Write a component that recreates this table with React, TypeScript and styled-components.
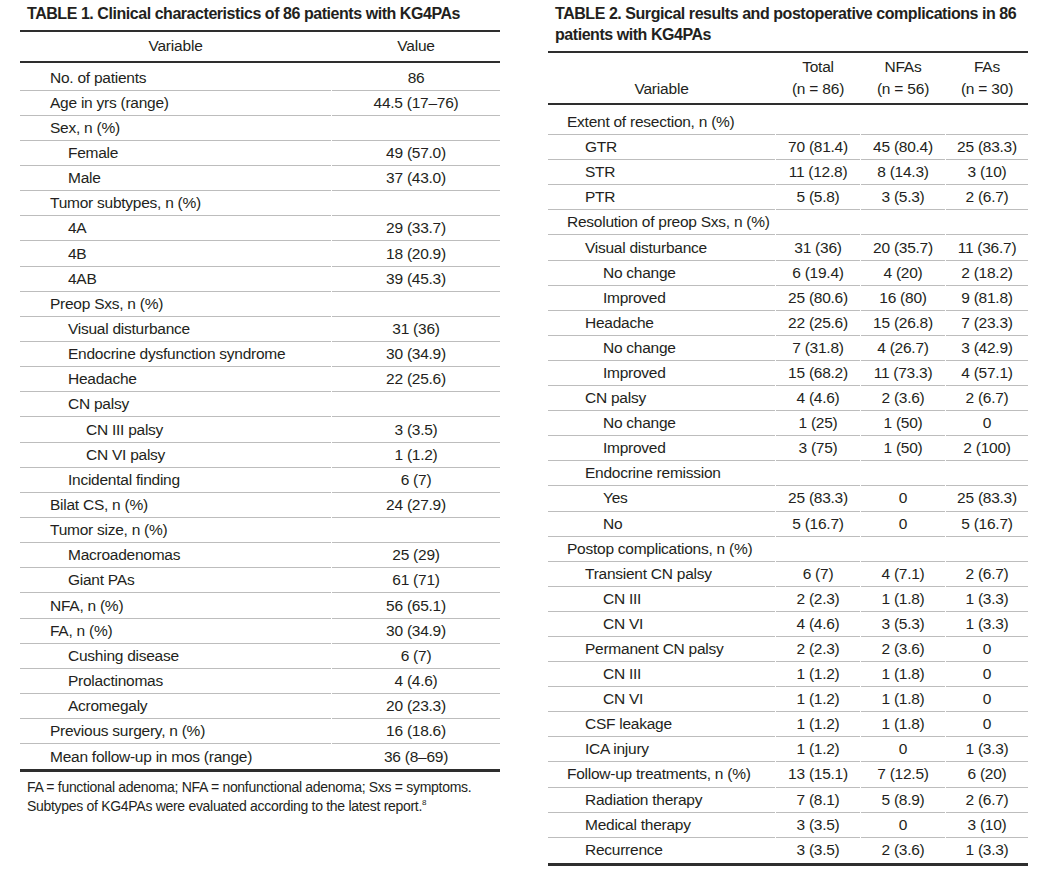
import React from "react";
import styled, { createGlobalStyle } from "styled-components";

const GlobalStyle = createGlobalStyle`
  html, body { margin: 0; padding: 0; background: #ffffff; }
  body { font-family: "Liberation Sans", Arial, sans-serif; color: #231f20; }
`;

const Page = styled.div`
  display: flex;
  align-items: flex-start;
  gap: 48px;
  padding: 3px 16px 0 20px;
  width: 1044px;
  box-sizing: border-box;
`;

const Column = styled.section`
  width: 480px;
  display: flex;
  flex-direction: column;
`;

const Title = styled.h2`
  margin: 0 0 6px 7px;
  font-size: 16px;
  line-height: 21px;
  font-weight: 700;
  letter-spacing: -0.45px;
  color: #231f20;
`;

const Table = styled.div`
  border-top: 2px solid #2e2e2e;
  border-bottom: 3px solid #2e2e2e;
`;

const HeadRow = styled.div<{ $cols: string; $h: number; $align: string }>`
  display: grid;
  grid-template-columns: ${(p) => p.$cols};
  column-gap: 1px;
  height: ${(p) => p.$h}px;
  border-bottom: 2px solid #2e2e2e;
  box-sizing: border-box;
  align-items: ${(p) => p.$align};
`;

const HeadCell = styled.div<{ $pb: number }>`
  text-align: center;
  font-size: 15.5px;
  line-height: 22px;
  letter-spacing: -0.2px;
  padding-bottom: ${(p) => p.$pb}px;
`;

const Body = styled.div<{ $pt: number }>`
  padding-top: ${(p) => p.$pt}px;
`;

const Row = styled.div<{ $cols: string; $h: number }>`
  display: grid;
  grid-template-columns: ${(p) => p.$cols};
  column-gap: 1px;
  height: ${(p) => p.$h}px;
  &:not(:last-child) > div {
    border-bottom: 1px solid #bdbdbd;
  }
`;

const Cell = styled.div`
  display: flex;
  align-items: center;
  justify-content: center;
  font-size: 15.5px;
  letter-spacing: -0.25px;
  white-space: nowrap;
  box-sizing: border-box;
`;

const LabelCell = styled(Cell)<{ $indent: number }>`
  justify-content: flex-start;
  padding-left: ${(p) => p.$indent}px;
`;

const Note = styled.p`
  margin: 6px 0 0 7px;
  font-size: 14px;
  line-height: 19px;
  letter-spacing: -0.3px;
  color: #231f20;
  sup {
    font-size: 8px;
    vertical-align: 6px;
    line-height: 0;
  }
`;

type R1 = [number, string, string];
type R2 = [number, string, string?, string?, string?];

const t1: R1[] = [
  [0, "No. of patients", "86"],
  [0, "Age in yrs (range)", "44.5 (17–76)"],
  [0, "Sex, n (%)", ""],
  [1, "Female", "49 (57.0)"],
  [1, "Male", "37 (43.0)"],
  [0, "Tumor subtypes, n (%)", ""],
  [1, "4A", "29 (33.7)"],
  [1, "4B", "18 (20.9)"],
  [1, "4AB", "39 (45.3)"],
  [0, "Preop Sxs, n (%)", ""],
  [1, "Visual disturbance", "31 (36)"],
  [1, "Endocrine dysfunction syndrome", "30 (34.9)"],
  [1, "Headache", "22 (25.6)"],
  [1, "CN palsy", ""],
  [2, "CN III palsy", "3 (3.5)"],
  [2, "CN VI palsy", "1 (1.2)"],
  [1, "Incidental finding", "6 (7)"],
  [0, "Bilat CS, n (%)", "24 (27.9)"],
  [0, "Tumor size, n (%)", ""],
  [1, "Macroadenomas", "25 (29)"],
  [1, "Giant PAs", "61 (71)"],
  [0, "NFA, n (%)", "56 (65.1)"],
  [0, "FA, n (%)", "30 (34.9)"],
  [1, "Cushing disease", "6 (7)"],
  [1, "Prolactinomas", "4 (4.6)"],
  [1, "Acromegaly", "20 (23.3)"],
  [0, "Previous surgery, n (%)", "16 (18.6)"],
  [0, "Mean follow-up in mos (range)", "36 (8–69)"],
];

const t2: R2[] = [
  [0, "Extent of resection, n (%)"],
  [1, "GTR", "70 (81.4)", "45 (80.4)", "25 (83.3)"],
  [1, "STR", "11 (12.8)", "8 (14.3)", "3 (10)"],
  [1, "PTR", "5 (5.8)", "3 (5.3)", "2 (6.7)"],
  [0, "Resolution of preop Sxs, n (%)"],
  [1, "Visual disturbance", "31 (36)", "20 (35.7)", "11 (36.7)"],
  [2, "No change", "6 (19.4)", "4 (20)", "2 (18.2)"],
  [2, "Improved", "25 (80.6)", "16 (80)", "9 (81.8)"],
  [1, "Headache", "22 (25.6)", "15 (26.8)", "7 (23.3)"],
  [2, "No change", "7 (31.8)", "4 (26.7)", "3 (42.9)"],
  [2, "Improved", "15 (68.2)", "11 (73.3)", "4 (57.1)"],
  [1, "CN palsy", "4 (4.6)", "2 (3.6)", "2 (6.7)"],
  [2, "No change", "1 (25)", "1 (50)", "0"],
  [2, "Improved", "3 (75)", "1 (50)", "2 (100)"],
  [1, "Endocrine remission"],
  [2, "Yes", "25 (83.3)", "0", "25 (83.3)"],
  [2, "No", "5 (16.7)", "0", "5 (16.7)"],
  [0, "Postop complications, n (%)"],
  [1, "Transient CN palsy", "6 (7)", "4 (7.1)", "2 (6.7)"],
  [2, "CN III", "2 (2.3)", "1 (1.8)", "1 (3.3)"],
  [2, "CN VI", "4 (4.6)", "3 (5.3)", "1 (3.3)"],
  [1, "Permanent CN palsy", "2 (2.3)", "2 (3.6)", "0"],
  [2, "CN III", "1 (1.2)", "1 (1.8)", "0"],
  [2, "CN VI", "1 (1.2)", "1 (1.8)", "0"],
  [1, "CSF leakage", "1 (1.2)", "1 (1.8)", "0"],
  [1, "ICA injury", "1 (1.2)", "0", "1 (3.3)"],
  [0, "Follow-up treatments, n (%)", "13 (15.1)", "7 (12.5)", "6 (20)"],
  [1, "Radiation therapy", "7 (8.1)", "5 (8.9)", "2 (6.7)"],
  [1, "Medical therapy", "3 (3.5)", "0", "3 (10)"],
  [1, "Recurrence", "3 (3.5)", "2 (3.6)", "1 (3.3)"],
];

const cols1 = "311px 168px";
const cols2 = "227px 84px 84px 82px";

export default function App() {
  return (
    <>
      <GlobalStyle />
      <Page>
        <Column>
          <Title>TABLE 1. Clinical characteristics of 86 patients with KG4PAs</Title>
          <Table>
            <HeadRow $cols={cols1} $h={31} $align="center">
              <HeadCell $pb={1}>Variable</HeadCell>
              <HeadCell $pb={1}>Value</HeadCell>
            </HeadRow>
            <Body $pt={2.5}>
              {t1.map(([lvl, label, val], i) => (
                <Row key={i} $cols={cols1} $h={25.15}>
                  <LabelCell $indent={30 + lvl * 18}>{label}</LabelCell>
                  <Cell>{val}</Cell>
                </Row>
              ))}
            </Body>
          </Table>
          <Note>
            FA = functional adenoma; NFA = nonfunctional adenoma; Sxs = symptoms.
            <br />
            Subtypes of KG4PAs were evaluated according to the latest report.<sup>8</sup>
          </Note>
        </Column>
        <Column>
          <Title>
            TABLE 2. Surgical results and postoperative complications in 86
            <br />
            patients with KG4PAs
          </Title>
          <Table>
            <HeadRow $cols={cols2} $h={52} $align="end">
              <HeadCell $pb={3}>Variable</HeadCell>
              <HeadCell $pb={3}>
                Total
                <br />
                (n = 86)
              </HeadCell>
              <HeadCell $pb={3}>
                NFAs
                <br />
                (n = 56)
              </HeadCell>
              <HeadCell $pb={3}>
                FAs
                <br />
                (n = 30)
              </HeadCell>
            </HeadRow>
            <Body $pt={5}>
              {t2.map(([lvl, label, a, b, c], i) => (
                <Row key={i} $cols={cols2} $h={25.1}>
                  <LabelCell $indent={19 + lvl * 18}>{label}</LabelCell>
                  <Cell>{a ?? ""}</Cell>
                  <Cell>{b ?? ""}</Cell>
                  <Cell>{c ?? ""}</Cell>
                </Row>
              ))}
            </Body>
          </Table>
        </Column>
      </Page>
    </>
  );
}
